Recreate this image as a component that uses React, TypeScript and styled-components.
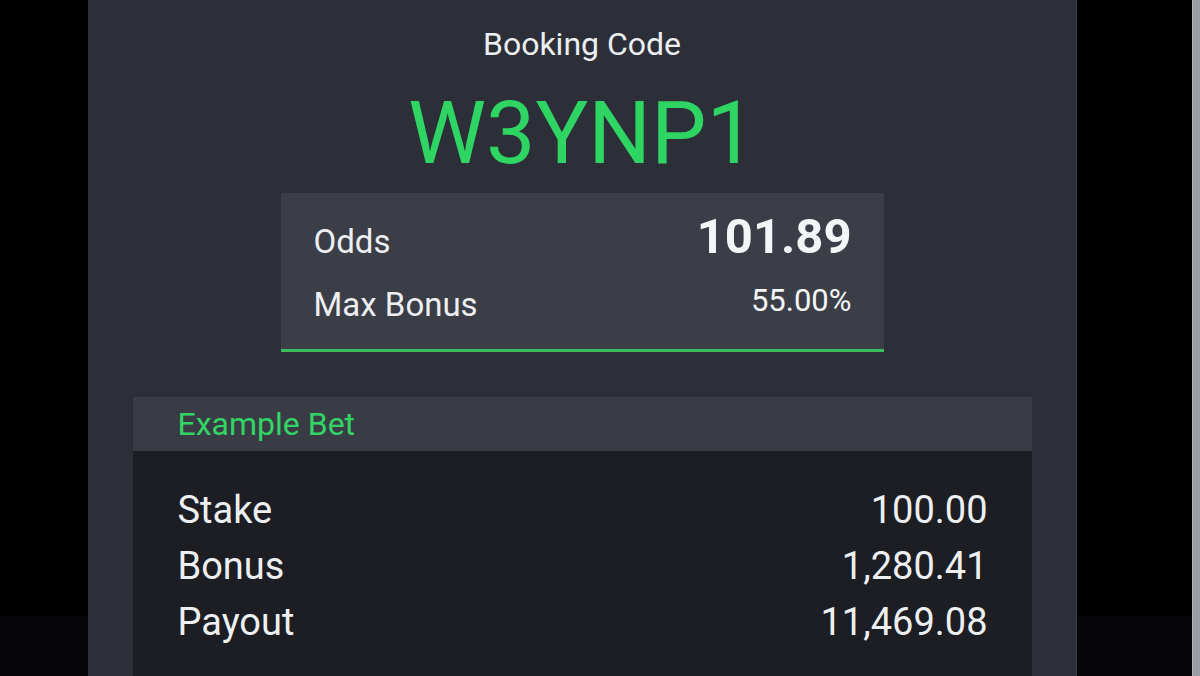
import React from 'react'
import styled, { createGlobalStyle } from 'styled-components'

const GlobalStyle = createGlobalStyle`
  html, body {
    margin: 0;
    padding: 0;
    background: #000;
    overflow: hidden;
  }
  body {
    font-family: Roboto, 'Liberation Sans', sans-serif;
    color: #eeeff1;
  }
`

const Screen = styled.div`
  display: flex;
  width: 1200px;
  height: 676px;
  background: #000;
`

const Gutter = styled.div<{ $width: number }>`
  width: ${({ $width }) => $width}px;
  flex-shrink: 0;
  display: flex;
  flex-direction: column;
  justify-content: flex-end;
`

const GutterFooter = styled.div`
  height: 60px;
  background: #060609;
`

const ScrollStrip = styled.div`
  width: 8px;
  flex-shrink: 0;
  background: #9b9da4;
  border-left: 1px solid #b4b6bc;
  box-sizing: border-box;
`

const Panel = styled.main`
  width: 989px;
  flex-shrink: 0;
  background: #2c2f38;
  border-right: 1px solid #3a3d45;
  display: flex;
  flex-direction: column;
  align-items: center;
  padding-top: 25px;
  box-sizing: border-box;
  overflow: hidden;
`

const Title = styled.h2`
  margin: 0;
  font-size: 32px;
  line-height: 38px;
  font-weight: 400;
  color: #eceef0;
`

const Code = styled.div`
  margin-top: 26px;
  font-size: 88px;
  line-height: 88px;
  font-weight: 400;
  color: #2fd563;
`

const OddsBox = styled.section`
  margin-top: 16px;
  width: 603px;
  box-sizing: border-box;
  background: #3b3e47;
  border-bottom: 3px solid #3bbd5e;
  padding: 19px 32px 24px 33px;
  display: flex;
  flex-direction: column;
`

const OddsRow = styled.div<{ $height: number; $align: string }>`
  display: flex;
  justify-content: space-between;
  align-items: ${({ $align }) => $align};
  height: ${({ $height }) => $height}px;
`

const Label = styled.span<{ $size: number; $lh: number }>`
  font-size: ${({ $size }) => $size}px;
  line-height: ${({ $lh }) => $lh}px;
  color: #eeeff1;
`

const Value = styled.span<{ $size: number; $lh: number; $bold?: boolean }>`
  font-size: ${({ $size }) => $size}px;
  font-weight: ${({ $bold }) => ($bold ? 700 : 400)};
  line-height: ${({ $lh }) => $lh}px;
  color: #f4f5f6;
`

const Example = styled.section`
  margin-top: 45px;
  width: 899px;
  display: flex;
  flex-direction: column;
`

const ExampleHeader = styled.div`
  height: 54px;
  background: #393c45;
  padding-left: 45px;
  display: flex;
  align-items: center;
  font-size: 32px;
  color: #33d466;
`

const ExampleBody = styled.div`
  background: #1c1e24;
  padding: 31px 44px 40px 45px;
  display: flex;
  flex-direction: column;
`

const BetRow = styled.div`
  display: flex;
  justify-content: space-between;
  font-size: 38px;
  line-height: 56px;
  color: #eeeff1;
`

const bets = [
  { label: 'Stake', value: '100.00' },
  { label: 'Bonus', value: '1,280.41' },
  { label: 'Payout', value: '11,469.08' },
]

const App = () => (
  <>
    <GlobalStyle />
    <Screen>
      <Gutter $width={88}>
        <GutterFooter />
      </Gutter>
      <Panel>
        <Title>Booking Code</Title>
        <Code>W3YNP1</Code>
        <OddsBox>
          <OddsRow $height={73} $align="baseline">
            <Label $size={33} $lh={33}>
              Odds
            </Label>
            <Value $size={49} $lh={49} $bold>
              101.89
            </Value>
          </OddsRow>
          <OddsRow $height={40} $align="flex-start">
            <Label $size={33} $lh={40}>
              Max Bonus
            </Label>
            <Value $size={31} $lh={32}>
              55.00%
            </Value>
          </OddsRow>
        </OddsBox>
        <Example>
          <ExampleHeader>Example Bet</ExampleHeader>
          <ExampleBody>
            {bets.map((b) => (
              <BetRow key={b.label}>
                <span>{b.label}</span>
                <span>{b.value}</span>
              </BetRow>
            ))}
          </ExampleBody>
        </Example>
      </Panel>
      <Gutter $width={115}>
        <GutterFooter />
      </Gutter>
      <ScrollStrip />
    </Screen>
  </>
)

export default App
